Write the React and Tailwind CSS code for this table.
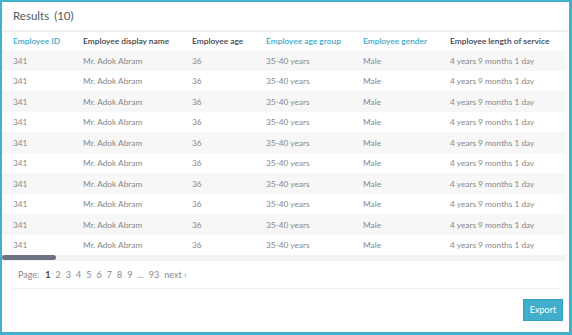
import React from "react";

const cols = [
  { label: "Employee ID", w: "w-[70px]", link: true },
  { label: "Employee display name", w: "w-[109px]", link: false },
  { label: "Employee age", w: "w-[74px]", link: false },
  { label: "Employee age group", w: "w-[97px]", link: true },
  { label: "Employee gender", w: "w-[87px]", link: true },
  { label: "Employee length of service", w: "w-[130px]", link: false },
];

const row = ["341", "Mr. Adok Abram", "36", "35-40 years", "Male", "4 years 9 months 1 day"];

export default function App() {
  const rows = Array.from({ length: 10 });
  return (
    <div
      className="w-[572px] h-[335px] bg-[#43b1cb] pl-[2px] pt-[2px] pr-[3px] pb-[3px]"
      style={{ fontFamily: "Lato, 'Open Sans', sans-serif" }}
    >
      <div className="w-full h-full bg-white flex flex-col">
        <div className="h-[30px] flex items-center pl-[11px] text-[11.5px] text-[#555a64] border-b-2 border-[#f2f2f4]">
          <span>Results</span>
          <span className="ml-[5px]">(10)</span>
        </div>
        <div className="w-[564px] overflow-hidden">
          <div className="h-[18px] flex items-center pl-[11px] text-[8.4px] font-semibold whitespace-nowrap">
            {cols.map((c) => (
              <div key={c.label} className={`${c.w} shrink-0 ${c.link ? "text-[#3aa9c8]" : "text-[#3b3f4a]"}`}>
                {c.label}
              </div>
            ))}
          </div>
          {rows.map((_, i) => (
            <div
              key={i}
              className={`h-[20.5px] flex items-center pl-[11px] pt-[1px] text-[8.3px] text-[#888888] whitespace-nowrap ${
                i % 2 === 0 ? "bg-[#f7f7f7]" : "bg-white"
              }`}
            >
              {row.map((v, j) => (
                <div key={j} className={`${cols[j].w} shrink-0`}>
                  {v}
                </div>
              ))}
            </div>
          ))}
          <div className="h-[6px] bg-[#f3f3f5]">
            <div className="w-[54px] h-[5px] rounded-full bg-[#6d7182]" />
          </div>
        </div>
        <div className="mx-[11px] mt-[1px] h-[27px] flex items-center pl-[5px] text-[9px] text-[#8a8a8a] border-b border-[#efefef] gap-[5px] w-[547px]">
          <span className="mr-[1px]">Page:</span>
          <span className="font-bold text-[#444]">1</span>
          {["2", "3", "4", "5", "6", "7", "8", "9", "...", "93"].map((p) => (
            <span key={p}>{p}</span>
          ))}
          <span>next ›</span>
        </div>
        <div className="flex justify-end pr-[6px] pt-[10px]">
          <button className="w-[40px] h-[22px] bg-[#41afcb] border border-[#369fbb] text-white text-[9px] flex items-center justify-center">
            Export
          </button>
        </div>
      </div>
    </div>
  );
}
